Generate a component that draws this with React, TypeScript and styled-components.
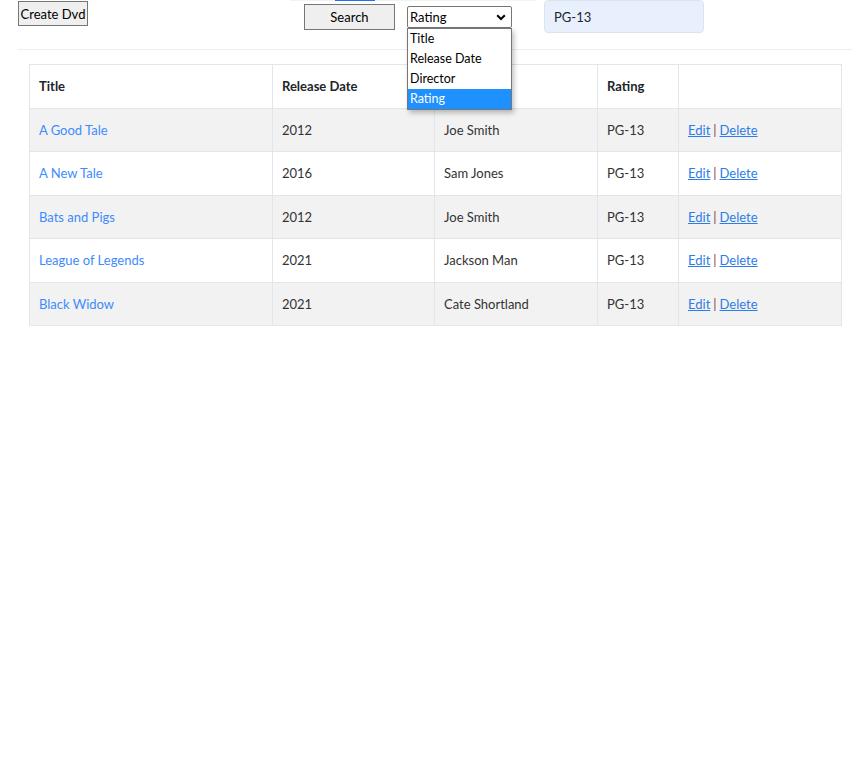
import React from "react";
import styled, { createGlobalStyle } from "styled-components";

const FONT = `"Lato", "Open Sans", sans-serif`;

const Global = createGlobalStyle`
  html, body { margin: 0; padding: 0; background: #fff; }
  body { font-family: ${FONT}; font-size: 13px; color: #212529; }
`;

const Page = styled.div`
  padding: 0 4px 0 18px;
`;

const TopBar = styled.div`
  display: flex;
  align-items: flex-start;
  height: 49px;
`;

const NativeButton = styled.button<{ $w: number; $h: number; $mt: number }>`
  width: ${(p) => p.$w}px;
  height: ${(p) => p.$h}px;
  margin-top: ${(p) => p.$mt}px;
  background: #efefef;
  border: 1px solid #767676;
  border-radius: 0;
  font-family: ${FONT};
  font-size: 13px;
  color: #000;
  padding: 0;
`;

const MiddleGroup = styled.div`
  margin-left: 202px;
  width: 247px;
  display: flex;
  flex-direction: column;
`;

const EdgeLine = styled.div`
  height: 1px;
  background: #f3f3f3;
`;

const EdgeActive = styled.div`
  margin-left: 45px;
  width: 40px;
  height: 1px;
  background: #1a73e8;
`;

const Controls = styled.div`
  display: flex;
  align-items: flex-start;
  padding-left: 14px;
  gap: 12px;
`;

const SelectWrap = styled.div`
  position: relative;
  margin-top: 5px;
  width: 105px;
`;

const SelectBox = styled.div`
  height: 22px;
  box-sizing: border-box;
  border: 1px solid #767676;
  border-radius: 2px;
  display: flex;
  align-items: center;
  justify-content: space-between;
  padding: 0 5px 0 2px;
  font-size: 13px;
  color: #000;
  background: #fff;
`;

const DropList = styled.div`
  position: absolute;
  top: 22px;
  left: 0;
  width: 105px;
  box-sizing: border-box;
  border: 1px solid #767676;
  background: #fff;
  box-shadow: 2px 3px 5px rgba(0, 0, 0, 0.25);
  z-index: 5;
`;

const DropItem = styled.div<{ $active?: boolean }>`
  height: 20px;
  line-height: 20px;
  padding-left: 2px;
  font-size: 12.5px;
  color: ${(p) => (p.$active ? "#fff" : "#000")};
  background: ${(p) => (p.$active ? "#1e90ff" : "transparent")};
`;

const SearchInput = styled.div`
  margin-left: 7px;
  width: 160px;
  height: 33px;
  box-sizing: border-box;
  background: #e8f0fe;
  border: 1px solid #dde3ea;
  border-radius: 4px;
  padding-left: 9px;
  display: flex;
  align-items: center;
  font-size: 13px;
  color: #212529;
`;

const Rule = styled.div`
  height: 1px;
  background: #eeeeee;
`;

const TableWrap = styled.div`
  padding: 14px 11px 0;
`;

const Table = styled.table`
  width: 812px;
  border-collapse: collapse;
  table-layout: fixed;
  border: 1px solid #e3e5e8;
`;

const Th = styled.th`
  text-align: left;
  font-weight: 700;
  padding: 12px 9px 12px;
  line-height: 19px;
  border: 1px solid #e3e5e8;
  color: #212529;
`;

const Col = styled.col<{ $w: number }>`
  width: ${(p) => p.$w}px;
`;

const Tr = styled.tr<{ $striped: boolean }>`
  background: ${(p) => (p.$striped ? "#f2f2f2" : "#fff")};
`;

const Td = styled.td`
  padding: 12px 9px 11px;
  line-height: 19.4px;
  border: 1px solid #e3e5e8;
  color: #333;
`;

const TitleLink = styled.a`
  color: #3d8bfd;
  text-decoration: none;
`;

const ActionLink = styled.a`
  color: #2b7de9;
  text-decoration: underline;
`;

const Sep = styled.span`
  color: #8b3a4a;
  margin: 0 3px;
`;

const Chevron = () => (
  <svg width="10" height="7" viewBox="0 0 10 7">
    <path d="M1.2 1.2 L5 5 L8.8 1.2" fill="none" stroke="#000" strokeWidth="2" />
  </svg>
);

const dvds = [
  { title: "A Good Tale", year: "2012", director: "Joe Smith", rating: "PG-13" },
  { title: "A New Tale", year: "2016", director: "Sam Jones", rating: "PG-13" },
  { title: "Bats and Pigs", year: "2012", director: "Joe Smith", rating: "PG-13" },
  { title: "League of Legends", year: "2021", director: "Jackson Man", rating: "PG-13" },
  { title: "Black Widow", year: "2021", director: "Cate Shortland", rating: "PG-13" },
];

const options = ["Title", "Release Date", "Director", "Rating"];
const colWidths = [243, 162, 163, 81, 163];

export default function App() {
  return (
    <Page>
      <Global />
      <TopBar>
        <NativeButton $w={70} $h={25} $mt={1}>Create Dvd</NativeButton>
        <MiddleGroup>
          <EdgeLine>
            <EdgeActive />
          </EdgeLine>
          <Controls>
            <NativeButton $w={91} $h={26} $mt={3}>Search</NativeButton>
            <SelectWrap>
              <SelectBox>
                <span>Rating</span>
                <Chevron />
              </SelectBox>
              <DropList>
                {options.map((o) => (
                  <DropItem key={o} $active={o === "Rating"}>{o}</DropItem>
                ))}
              </DropList>
            </SelectWrap>
          </Controls>
        </MiddleGroup>
        <SearchInput>PG-13</SearchInput>
      </TopBar>
      <Rule />
      <TableWrap>
        <Table>
          <colgroup>
            {colWidths.map((w, i) => (
              <Col key={i} $w={w} />
            ))}
          </colgroup>
          <thead>
            <tr>
              <Th>Title</Th>
              <Th>Release Date</Th>
              <Th>Director</Th>
              <Th>Rating</Th>
              <Th></Th>
            </tr>
          </thead>
          <tbody>
            {dvds.map((d, i) => (
              <Tr key={d.title} $striped={i % 2 === 0}>
                <Td><TitleLink href="#">{d.title}</TitleLink></Td>
                <Td>{d.year}</Td>
                <Td>{d.director}</Td>
                <Td>{d.rating}</Td>
                <Td>
                  <ActionLink href="#">Edit</ActionLink>
                  <Sep>|</Sep>
                  <ActionLink href="#">Delete</ActionLink>
                </Td>
              </Tr>
            ))}
          </tbody>
        </Table>
      </TableWrap>
    </Page>
  );
}
